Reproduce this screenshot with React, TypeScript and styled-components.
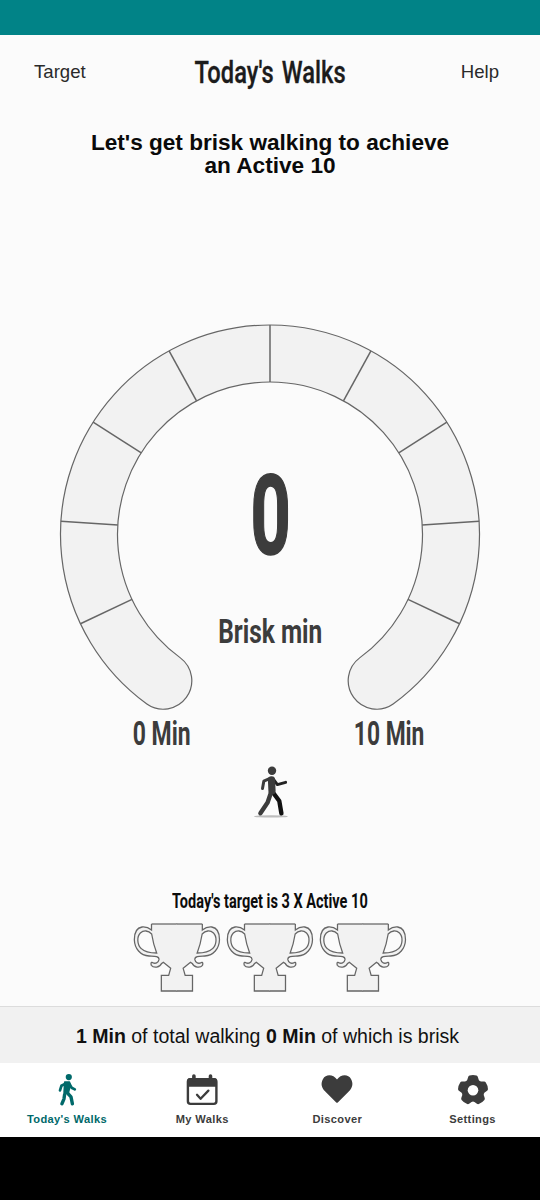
import React from "react";
import styled, { createGlobalStyle } from "styled-components";

const ink = "#3c3c3c";
const line = "#666";
const panel = "#f2f2f2";
const paper = "#fbfbfb";
const teal = "#00696a";

const GlobalStyle = createGlobalStyle`
  * { box-sizing: border-box; }
  body { margin: 0; background: ${paper}; font-family: "Liberation Sans", Arial, sans-serif; }
`;

const Screen = styled.div`
  display: flex;
  flex-direction: column;
  width: 540px;
  height: 1200px;
  overflow: hidden;
  background: ${paper};
`;

const StatusBar = styled.div`
  height: 35px;
  flex: none;
  background: #018387;
`;

const Header = styled.header`
  display: grid;
  grid-template-columns: 120px 1fr 120px;
  align-items: center;
  height: 73px;
  flex: none;
`;

const HeaderLink = styled.a<{ $side: "left" | "right" }>`
  font-size: 18.6px;
  color: #2a2a2a;
  text-align: ${(p) => p.$side};
  padding: ${(p) => (p.$side === "left" ? "0 0 0 34px" : "0 41px 0 0")};
`;

const Condensed = styled.span<{ $size: number; $squeeze: number; $weight?: number; $color?: string }>`
  display: block;
  font-family: Roboto, "Liberation Sans", sans-serif;
  font-size: ${(p) => p.$size}px;
  font-weight: ${(p) => p.$weight ?? 700};
  line-height: 1;
  white-space: nowrap;
  color: ${(p) => p.$color ?? ink};
  transform: scaleX(${(p) => p.$squeeze});
`;

const TitleSlot = styled.h1`
  display: flex;
  justify-content: center;
  margin: 0;
  word-spacing: 3px;
  -webkit-text-stroke: 0.35px #1c1c1c;
`;

const Headline = styled.h2`
  height: 216px;
  margin: 0;
  padding: 24px 80px 0;
  flex: none;
  font-size: 22.6px;
  line-height: 22.7px;
  font-weight: 700;
  text-align: center;
  color: #0a0a0a;
`;

const GaugeArea = styled.section`
  display: grid;
  justify-items: center;
  height: 387px;
  flex: none;
  > * { grid-area: 1 / 1; }
`;

const Reading = styled.div`
  display: flex;
  flex-direction: column;
  align-items: center;
  padding-top: 137px;
  gap: 42px;
`;

const BigDigit = styled(Condensed)`
  padding-left: 2px;
  -webkit-text-stroke: 1.6px ${ink};
`;

const ScaleLabels = styled.div`
  display: grid;
  grid-template-columns: 227px 227px;
  place-content: center;
  place-items: center;
  height: 44px;
  padding-left: 11px;
  flex: none;
`;

const WalkerSlot = styled.div`
  display: flex;
  justify-content: center;
  padding-top: 9px;
  height: 127px;
  flex: none;
`;

const TargetArea = styled.section`
  display: flex;
  flex-direction: column;
  align-items: center;
  gap: 12px;
  padding-top: 10px;
  height: 124px;
  flex: none;
`;

const TrophyRow = styled.div`
  display: flex;
  gap: 5px;
`;

const Summary = styled.p`
  display: flex;
  align-items: center;
  justify-content: center;
  height: 57px;
  margin: 0;
  padding: 2px 5px 0 0;
  flex: none;
  border-top: 1px solid #dcdcdc;
  background: #f1f1f1;
  font-size: 19.55px;
  white-space: pre;
  color: #111;
`;

const NavBar = styled.nav`
  display: grid;
  grid-template-columns: repeat(4, 135.2px);
  height: 74px;
  flex: none;
  background: #fff;
`;

const NavItem = styled.a<{ $active?: boolean }>`
  display: flex;
  flex-direction: column;
  align-items: center;
  gap: 5px;
  padding: 10px 1.2px 0 0;
  font-size: 11.1px;
  line-height: 14px;
  font-weight: 700;
  letter-spacing: 0.36px;
  color: ${(p) => (p.$active ? teal : ink)};
`;

const SystemBar = styled.div`
  flex: 1;
  background: #000;
`;

const C = { x: 211, y: 210.5 };
const OUTER = 209.5;
const INNER = 152.5;

/* Angles run clockwise from twelve o'clock. */
const at = (r: number, deg: number) => {
  const a = (deg * Math.PI) / 180;
  return `${(C.x + r * Math.sin(a)).toFixed(2)} ${(C.y - r * Math.cos(a)).toFixed(2)}`;
};

const Gauge = () => {
  const dividers = Array.from({ length: 9 }, (_, i) => -144 + 28.8 * (i + 1));
  return (
    <svg width="422" height="387" viewBox="0 0 422 387" fill={panel} stroke={line} strokeWidth="1.2">
      <path
        d={`M${at(OUTER, -144)} A${OUTER} ${OUTER} 0 1 1 ${at(OUTER, 144)} A28.5 28.5 0 0 1 ${at(INNER, 144)} A${INNER} ${INNER} 0 1 0 ${at(INNER, -144)} A28.5 28.5 0 0 1 ${at(OUTER, -144)}Z`}
      />
      {dividers.map((d) => (
        <path key={d} d={`M${at(INNER, d)} L${at(OUTER, d)}`} strokeWidth="1.5" />
      ))}
    </svg>
  );
};

const Walker = () => (
  <svg width="40" height="56" viewBox="0 0 40 56" fill="none" strokeLinecap="round" strokeLinejoin="round">
    <ellipse cx="21" cy="52.4" rx="17" ry="1.2" fill="#bdbdbd" />
    <path d="M23 28.5 L29.3 37 L31.4 49.3" stroke="#111" strokeWidth="4.4" />
    <path d="M23.5 15.5 L27.4 20.6 L35.6 18.4" stroke="#222" strokeWidth="3" />
    <path d="M19.5 14.6 L13.8 17.2 L12.5 24.4" stroke={ink} strokeWidth="3" />
    <path d="M21.5 15.8 L22 27" stroke={ink} strokeWidth="7.2" />
    <path d="M21 28.5 L17.6 38.5 L10.4 49.3" stroke={ink} strokeWidth="4.4" />
    <circle cx="22" cy="6.7" r="4.2" fill={ink} />
  </svg>
);

const HALF =
  "M75.5 3 V21 C67 14 57 11 47 12 C34 14 24 27 24 50 C25 77 42 97 68 99 C79 100 99 98 98 110 C96 120 87 123 79 119 C74 116 73 122 75 127 C82 136 101 134 106 121 L111 118 L133 136 L127 157 H105 V204 H152.5";

const Trophy = () => (
  <svg width="88" height="70" viewBox="20 0 264 210" stroke={line} strokeWidth="3.8">
    {[undefined, "translate(303.5 0) scale(-1 1)"].map((t, i) => (
      <g key={i} transform={t}>
        <path d={`${HALF} V3 Z`} fill={panel} stroke="none" />
        <path d="M152.5 3 H75.5" fill="none" />
        <path d={HALF} fill="none" />
        <path d="M76 33 C66 22 52 21 42 30 C31 41 32 66 45 77 C54 86 72 90 91 90 C84 72 80 58 76 33Z" fill={paper} />
      </g>
    ))}
  </svg>
);

const WalkIcon = () => (
  <svg width="32" height="34" viewBox="0 0 32 34" fill="none" stroke={teal} strokeLinecap="round" strokeLinejoin="round">
    <circle cx="17.8" cy="4.1" r="3.1" fill={teal} stroke="none" />
    <path d="M15 10.4 L10.4 12.8 L9 17.4" strokeWidth="2.7" />
    <path d="M18.5 11 L20.6 14.7 L23.8 16.4" strokeWidth="2.7" />
    <path d="M13.8 9.2 L18.4 9.2 L19 13 L17.2 20 L13.2 19.2Z" fill={teal} strokeWidth="1.8" />
    <path d="M13.6 21.5 L13 25.8 L10.9 30.8" strokeWidth="3.4" />
    <path d="M15.5 19 L20 23.8 L21.4 30.8" strokeWidth="3.4" />
  </svg>
);

const CalendarIcon = () => (
  <svg width="34" height="34" viewBox="0 0 34 34" fill="none" stroke={ink} strokeLinecap="round" strokeLinejoin="round">
    <rect x="2.9" y="6.1" width="28.5" height="24.8" rx="2.6" strokeWidth="2.4" />
    <path d="M2.2 13.8 V8 a3 3 0 0 1 3-3 H29 a3 3 0 0 1 3 3 V13.8Z" fill={ink} stroke="none" />
    <path d="M8.9 3 V7 M25.5 3 V7" strokeWidth="3.6" />
    <path d="M12 21.8 L15.6 25.8 L23.4 17.6" strokeWidth="2.3" />
  </svg>
);

const HeartIcon = () => (
  <svg width="34" height="34" viewBox="0 0 34 34" fill={ink}>
    <path d="M17 6.6 C20.8 1 28.3 1 31 6 C33.6 10.8 32.4 14.8 29 18.2 L18 29.3 Q17 30.3 16 29.3 L5 18.2 C1.6 14.8 .4 10.8 3 6 C5.7 1 13.2 1 17 6.6Z" />
  </svg>
);

const polar = (r: number, deg: number) => {
  const a = (deg * Math.PI) / 180;
  return `${(17 + r * Math.sin(a)).toFixed(2)} ${(17.2 - r * Math.cos(a)).toFixed(2)}`;
};

const GearIcon = () => {
  const d = [0, 72, 144, 216, 288]
    .map((k) => `${polar(13, k - 13)} Q${polar(13.5, k)} ${polar(13, k + 13)} L${polar(10.2, k + 23)} Q${polar(8.8, k + 36)} ${polar(10.2, k + 49)}`)
    .join(" L");
  return (
    <svg width="34" height="34" viewBox="0 0 34 34" stroke={ink} strokeLinejoin="round">
      <path d={`M${d}Z`} fill={ink} strokeWidth="4" />
      <circle cx="17" cy="17.2" r="5.3" fill="#fff" stroke="none" />
    </svg>
  );
};

export default function App() {
  return (
    <Screen>
      <GlobalStyle />
      <StatusBar />
      <Header>
        <HeaderLink $side="left">Target</HeaderLink>
        <TitleSlot>
          <Condensed $size={32} $squeeze={0.74} $weight={500} $color="#1c1c1c">Today's Walks</Condensed>
        </TitleSlot>
        <HeaderLink $side="right">Help</HeaderLink>
      </Header>
      <Headline>
        Let's get brisk walking to achieve
        <br />
        an Active 10
      </Headline>
      <GaugeArea>
        <Gauge />
        <Reading>
          <BigDigit $size={111.5} $squeeze={0.63}>0</BigDigit>
          <Condensed $size={33} $squeeze={0.74}>Brisk min</Condensed>
        </Reading>
      </GaugeArea>
      <ScaleLabels>
        <Condensed $size={33} $squeeze={0.695}>0 Min</Condensed>
        <Condensed $size={33} $squeeze={0.69}>10 Min</Condensed>
      </ScaleLabels>
      <WalkerSlot>
        <Walker />
      </WalkerSlot>
      <TargetArea>
        <Condensed $size={19.3} $squeeze={0.753} $color="#0c0c0c">Today's target is 3 X Active 10</Condensed>
        <TrophyRow>
          <Trophy />
          <Trophy />
          <Trophy />
        </TrophyRow>
      </TargetArea>
      <Summary>
        <b>1 Min</b> of total walking <b>0 Min</b> of which is brisk
      </Summary>
      <NavBar>
        <NavItem $active>
          <WalkIcon />
          Today's Walks
        </NavItem>
        <NavItem>
          <CalendarIcon />
          My Walks
        </NavItem>
        <NavItem>
          <HeartIcon />
          Discover
        </NavItem>
        <NavItem>
          <GearIcon />
          Settings
        </NavItem>
      </NavBar>
      <SystemBar />
    </Screen>
  );
}
